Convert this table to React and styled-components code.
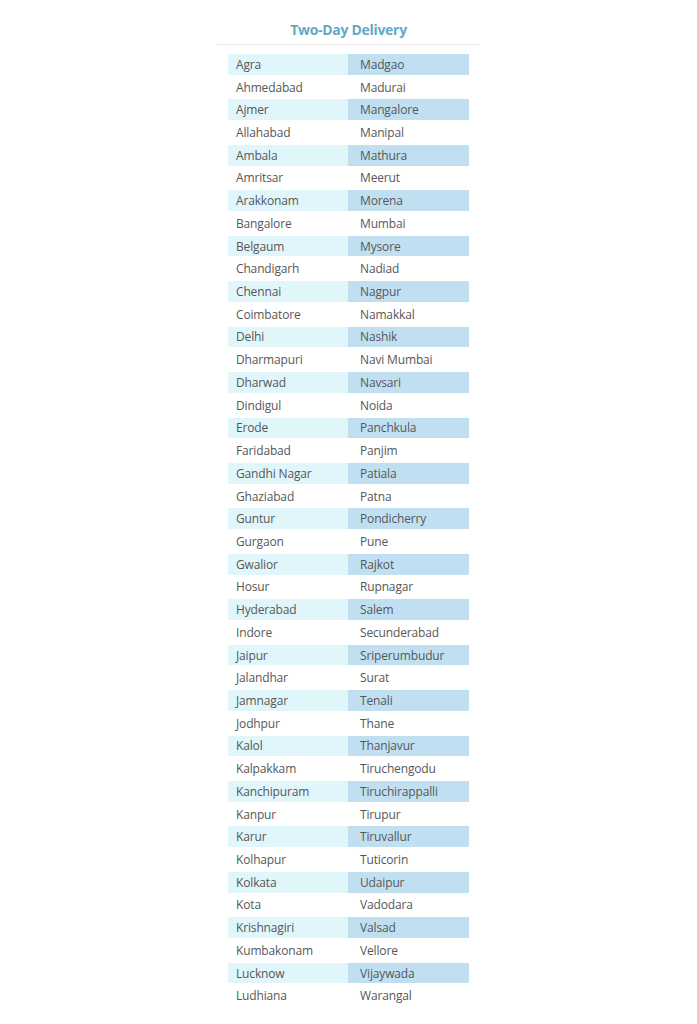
import styled, { createGlobalStyle } from "styled-components";

const rows = [
    ["Agra", "Madgao"],
    ["Ahmedabad", "Madurai"],
    ["Ajmer", "Mangalore"],
    ["Allahabad", "Manipal"],
    ["Ambala", "Mathura"],
    ["Amritsar", "Meerut"],
    ["Arakkonam", "Morena"],
    ["Bangalore", "Mumbai"],
    ["Belgaum", "Mysore"],
    ["Chandigarh", "Nadiad"],
    ["Chennai", "Nagpur"],
    ["Coimbatore", "Namakkal"],
    ["Delhi", "Nashik"],
    ["Dharmapuri", "Navi Mumbai"],
    ["Dharwad", "Navsari"],
    ["Dindigul", "Noida"],
    ["Erode", "Panchkula"],
    ["Faridabad", "Panjim"],
    ["Gandhi Nagar", "Patiala"],
    ["Ghaziabad", "Patna"],
    ["Guntur", "Pondicherry"],
    ["Gurgaon", "Pune"],
    ["Gwalior", "Rajkot"],
    ["Hosur", "Rupnagar"],
    ["Hyderabad", "Salem"],
    ["Indore", "Secunderabad"],
    ["Jaipur", "Sriperumbudur"],
    ["Jalandhar", "Surat"],
    ["Jamnagar", "Tenali"],
    ["Jodhpur", "Thane"],
    ["Kalol", "Thanjavur"],
    ["Kalpakkam", "Tiruchengodu"],
    ["Kanchipuram", "Tiruchirappalli"],
    ["Kanpur", "Tirupur"],
    ["Karur", "Tiruvallur"],
    ["Kolhapur", "Tuticorin"],
    ["Kolkata", "Udaipur"],
    ["Kota", "Vadodara"],
    ["Krishnagiri", "Valsad"],
    ["Kumbakonam", "Vellore"],
    ["Lucknow", "Vijaywada"],
    ["Ludhiana", "Warangal"]
]

const GlobalStyle = createGlobalStyle`
    body {
        margin: 0;
        background: #FFFFFF;
        font-family: "Open Sans", "Liberation Sans", sans-serif;
    }
`

export default function App () {
    return (
        <Page>
            <GlobalStyle />
            <Title>Two-Day Delivery</Title>
            <Rule />
            <Table>
                {rows.map((row, i) => (
                    <Row key={row[0]}>
                        <Cell shaded={i % 2 === 0} tone="light">{row[0]}</Cell>
                        <Cell shaded={i % 2 === 0} tone="dark" right>{row[1]}</Cell>
                    </Row>
                ))}
            </Table>
        </Page>
    )
}

const Page = styled.div`
    width: 697px;
    display: flex;
    flex-direction: column;
    align-items: center;
    padding-top: 20px;
`

const Title = styled.h1`
    margin: 0;
    font-size: 14px;
    line-height: 20px;
    font-weight: 700;
    color: #62A9C6;
    letter-spacing: -0.3px;
`

const Rule = styled.div`
    width: 263px;
    height: 1px;
    background: #E9E9E9;
    margin-top: 4px;
`

const Table = styled.div`
    display: flex;
    flex-direction: column;
    gap: 2px;
    margin-top: 9px;
    width: 241px;
`

const Row = styled.div`
    display: grid;
    grid-template-columns: 120px 121px;
    height: 20.72px;
`

const Cell = styled.div`
    display: flex;
    align-items: center;
    padding-left: ${props => props.right ? "12px" : "8px"};
    font-size: 12px;
    letter-spacing: -0.15px;
    color: #575757;
    white-space: nowrap;
    background: ${props => !props.shaded ? "transparent" : props.tone === "light" ? "#E1F6FB" : "#C0E0F2"};
`
